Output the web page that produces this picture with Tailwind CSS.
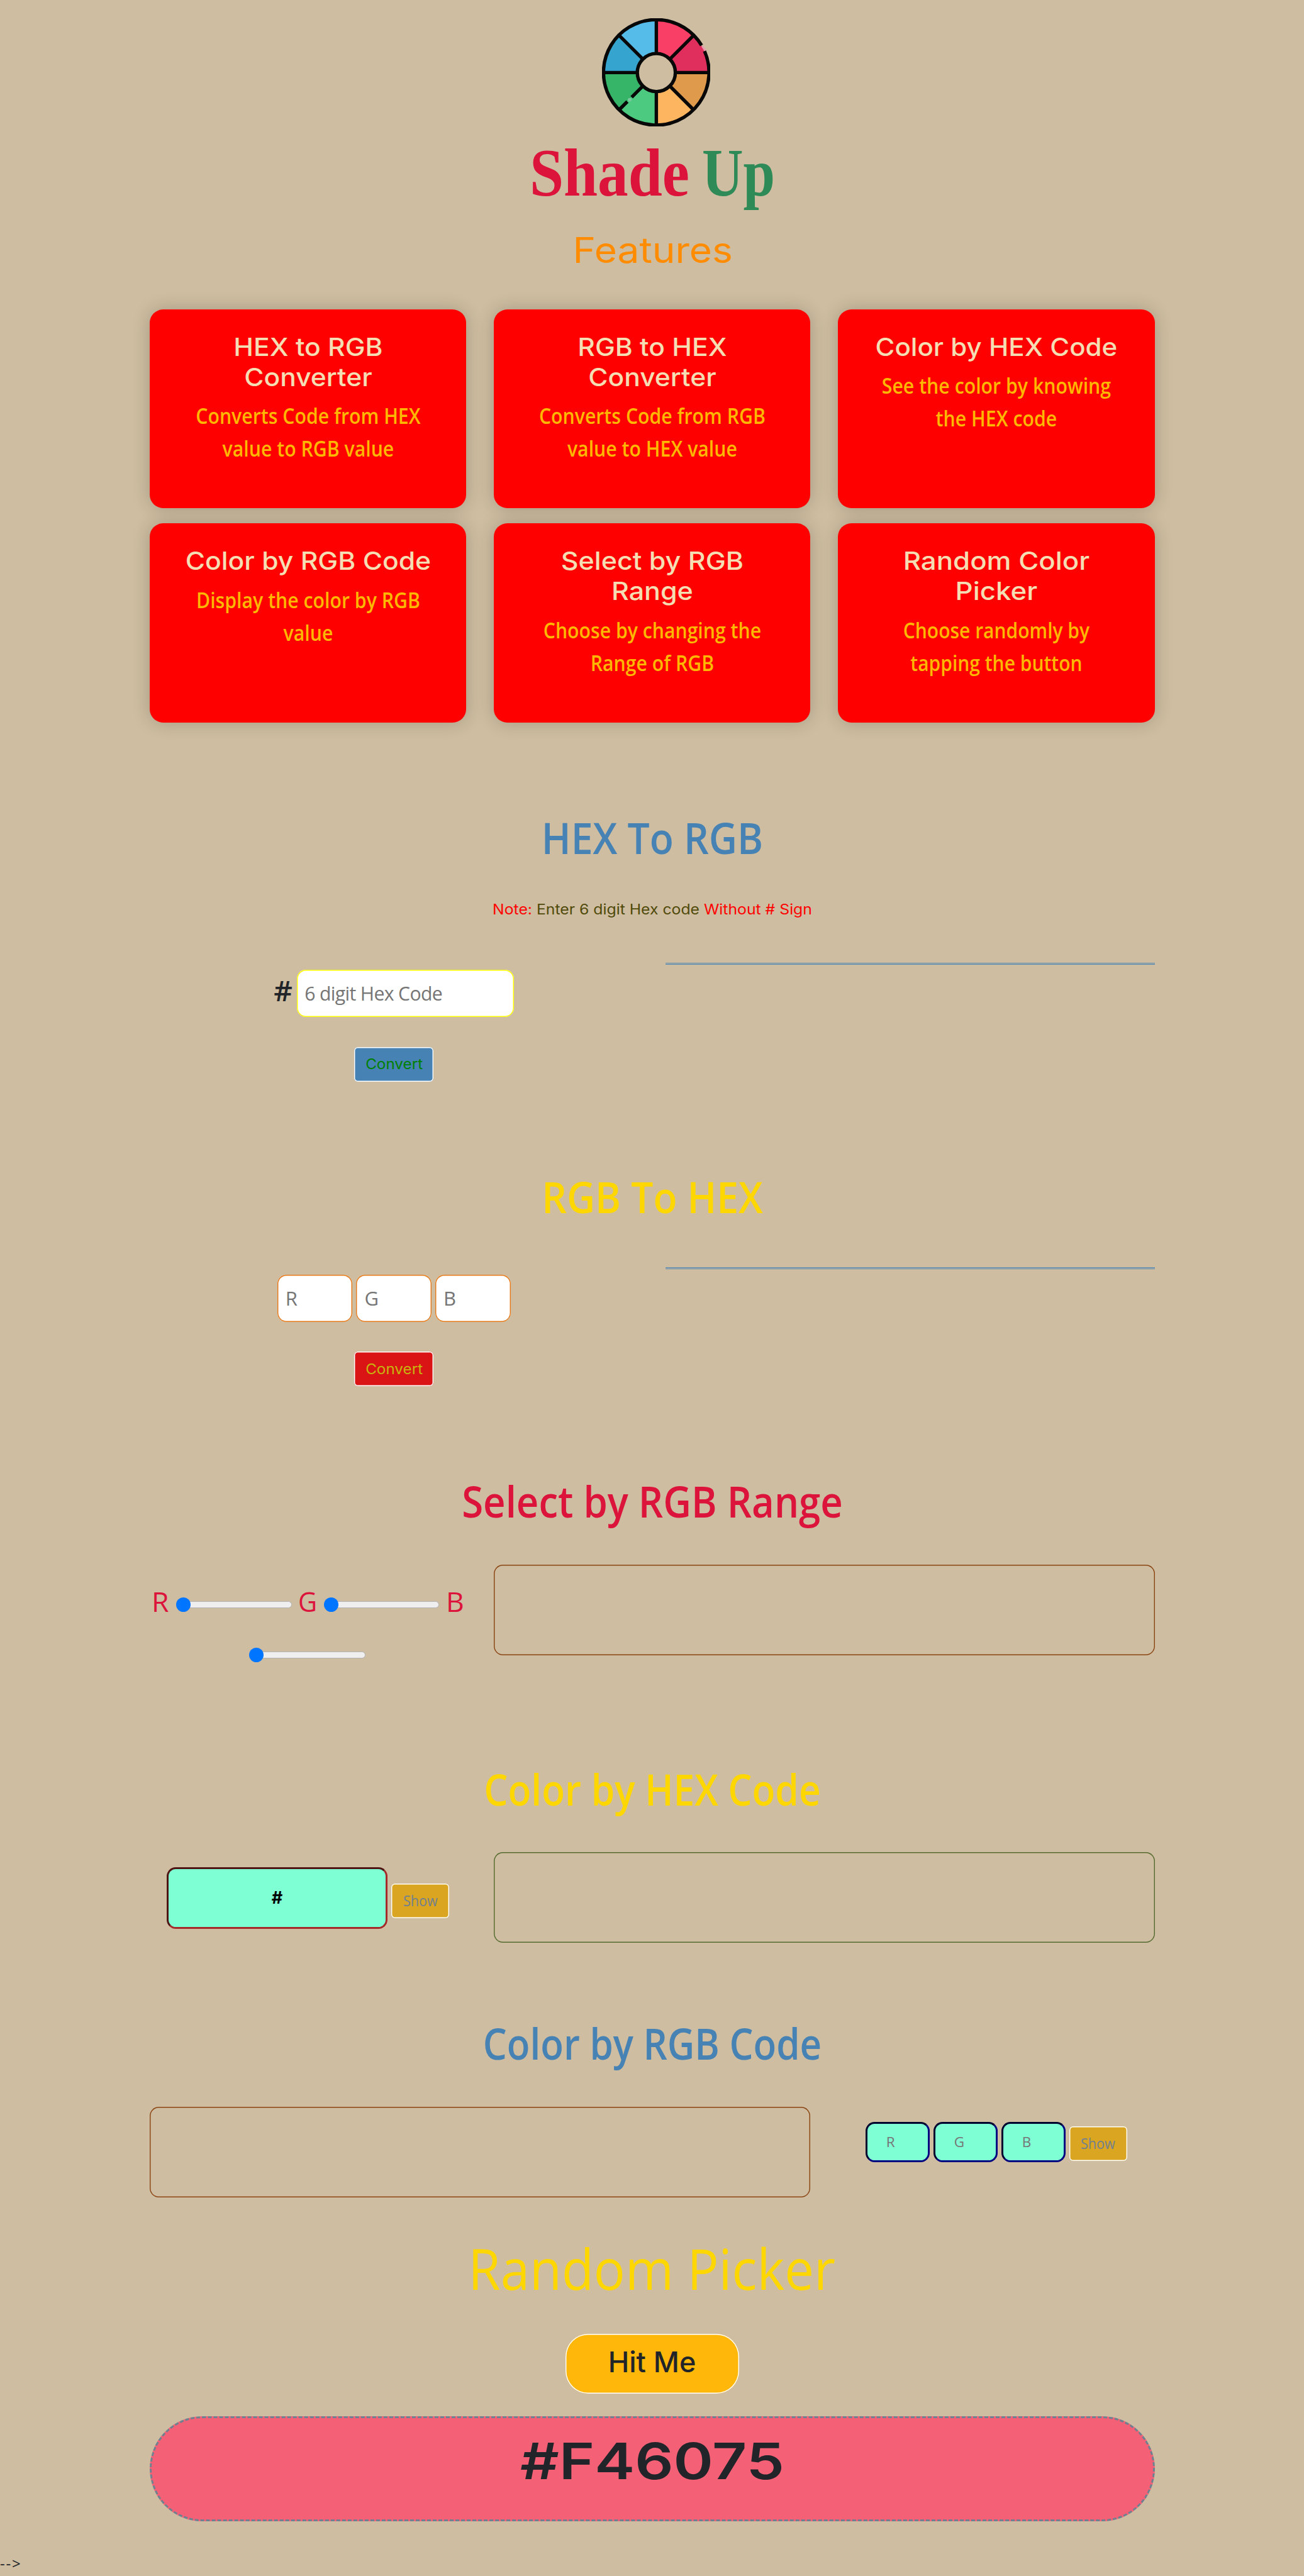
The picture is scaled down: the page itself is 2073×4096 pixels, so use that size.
<!DOCTYPE html>
<html lang="en">
<head>
<meta charset="utf-8">
<title>Shade Up</title>
<script src="https://cdn.jsdelivr.net/npm/@tailwindcss/browser@4"></script>
</head>
<body class="bg-[#cebda0] text-[#212529] font-['Open_Sans',sans-serif] overflow-x-hidden">
<main class="w-[1598px] mx-auto flex flex-col">

  <header class="flex flex-col items-center pt-[28.7px]">
    <svg class="w-[172.8px] h-[172.8px] ml-[13px] shrink-0" viewBox="-120 -120 240 240" fill="none">
      <path fill="#fa3f67" d="M0 0V-116A116 116 0 0 1 82-82Z"/>
      <path fill="#e02f5c" d="M0 0L82-82A116 116 0 0 1 116 0Z"/>
      <path fill="#e09a4b" d="M0 0H116A116 116 0 0 1 82 82Z"/>
      <path fill="#fdb560" d="M0 0L82 82A116 116 0 0 1 0 116Z"/>
      <path fill="#4bca80" d="M0 0V116A116 116 0 0 1-82 82Z"/>
      <path fill="#36b568" d="M0 0L-82 82A116 116 0 0 1-116 0Z"/>
      <path fill="#35a5d0" d="M0 0H-116A116 116 0 0 1-82-82Z"/>
      <path fill="#55bbe9" d="M0 0L-82-82A116 116 0 0 1 0-116Z"/>
      <circle r="42" fill="#cebda0"/>
      <path stroke="#e79bb0" stroke-width="4" d="M101.5-58L108.5-48"/>
      <circle cx="-59" cy="60" r="4" fill="#7cc9a0"/>
      <g stroke="#080808" stroke-width="7.500">
        <circle r="42"/>
        <path d="M0-42V-116M0 42V116M-42 0H-116M42 0H116M30-30L81-81M-30-30L-81-81M30 30L81 81M-30 30L-54.500 54.500M-64 64L-81 81"/>
        <path d="M106.400-47.400A116.500 116.500 0 1 1 99.900-60"/>
      </g>
    </svg>
    <h1 class="mt-[13.8px] mr-[4px] flex h-[120px] w-[386px] justify-between font-['Liberation_Serif',serif] text-[108px] leading-[120px] font-bold whitespace-nowrap">
      <span class="w-[252px] text-[#dc143c]"><span class="inline-block origin-left scale-x-[0.9]">Shade</span></span>
      <span class="w-[112px] text-[#2e8b57]"><span class="inline-block origin-left scale-x-[0.84]">Up</span></span>
    </h1>
    <h2 class="mt-[32.6px] ml-[3px] h-[60px] scale-x-[1.109] font-['Inter',sans-serif] text-[56px] leading-[60px] text-[#ff8c00]">Features</h2>
  </header>

  <section class="mt-[63.7px] grid grid-cols-3 auto-rows-[316.6px] gap-x-[43.2px] gap-y-[23.8px] text-center">
    <article class="rounded-[21.6px] bg-[#ff0000] px-5 pt-[36.2px] shadow-[0_0_28.8px_rgba(0,0,0,0.2)]">
      <h3 class="mb-[11.3px] scale-x-[1.06] font-['Inter',sans-serif] text-[40.2px] leading-[48.2px] font-medium text-[#f5deb3]">HEX to RGB<br>Converter</h3>
      <p class="scale-x-[0.869] text-[34.8px] leading-[52px] font-semibold text-[#ffb800]">Converts Code from HEX<br>value to RGB value</p>
    </article>
    <article class="rounded-[21.6px] bg-[#ff0000] px-5 pt-[36.2px] shadow-[0_0_28.8px_rgba(0,0,0,0.2)]">
      <h3 class="mb-[11.3px] scale-x-[1.06] font-['Inter',sans-serif] text-[40.2px] leading-[48.2px] font-medium text-[#f5deb3]">RGB to HEX<br>Converter</h3>
      <p class="scale-x-[0.869] text-[34.8px] leading-[52px] font-semibold text-[#ffb800]">Converts Code from RGB<br>value to HEX value</p>
    </article>
    <article class="rounded-[21.6px] bg-[#ff0000] px-5 pt-[36.2px] shadow-[0_0_28.8px_rgba(0,0,0,0.2)]">
      <h3 class="mb-[11.3px] scale-x-[1.047] font-['Inter',sans-serif] text-[40.2px] leading-[48.2px] font-medium text-[#f5deb3]">Color by HEX Code</h3>
      <p class="scale-x-[0.87] text-[34.8px] leading-[52px] font-semibold text-[#ffb800]">See the color by knowing<br>the HEX code</p>
    </article>
    <article class="rounded-[21.6px] bg-[#ff0000] px-5 pt-[36.2px] shadow-[0_0_28.8px_rgba(0,0,0,0.2)]">
      <h3 class="mb-[11.3px] scale-x-[1.062] font-['Inter',sans-serif] text-[40.2px] leading-[48.2px] font-medium text-[#f5deb3]">Color by RGB Code</h3>
      <p class="scale-x-[0.869] text-[34.8px] leading-[52px] font-semibold text-[#ffb800]">Display the color by RGB<br>value</p>
    </article>
    <article class="rounded-[21.6px] bg-[#ff0000] px-5 pt-[36.2px] shadow-[0_0_28.8px_rgba(0,0,0,0.2)]">
      <h3 class="mb-[11.3px] scale-x-[1.07] font-['Inter',sans-serif] text-[40.2px] leading-[48.2px] font-medium text-[#f5deb3]">Select by RGB<br>Range</h3>
      <p class="scale-x-[0.868] text-[34.8px] leading-[52px] font-semibold text-[#ffb800]">Choose by changing the<br>Range of RGB</p>
    </article>
    <article class="rounded-[21.6px] bg-[#ff0000] px-5 pt-[36.2px] shadow-[0_0_28.8px_rgba(0,0,0,0.2)]">
      <h3 class="mb-[11.3px] scale-x-[1.09] font-['Inter',sans-serif] text-[40.2px] leading-[48.2px] font-medium text-[#f5deb3]">Random Color<br>Picker</h3>
      <p class="scale-x-[0.862] text-[34.8px] leading-[52px] font-semibold text-[#ffb800]">Choose randomly by<br>tapping the button</p>
    </article>
  </section>

  <section class="mt-[142.5px]">
    <h2 class="scale-x-[0.904] text-center text-[69px] leading-[80px] font-semibold text-[#4682b4]">HEX To RGB</h2>
    <p class="mt-[57.7px] scale-x-[1.1] text-center font-['Inter',sans-serif] text-[22.5px] leading-[34px] whitespace-nowrap text-[#ff0000]">Note: <span class="text-[#504a0a]">Enter 6 digit Hex code</span> Without # Sign</p>
    <div class="mt-[68.2px] grid grid-cols-2 gap-x-[43.2px]">
      <div class="flex flex-col items-center pt-[11.5px]">
        <div class="flex items-start">
          <span class="w-[37px] text-[46px] leading-[64px] font-semibold">#</span>
          <input class="h-[75px] w-[345px] rounded-[14.4px] bg-white pl-[12px] text-[30.2px] tracking-[-0.65px] shadow-[inset_0_0_0_1.44px_#ffff00] placeholder:text-[#757575]" placeholder="6 digit Hex Code">
        </div>
        <button class="mt-[47.2px] h-[55px] w-[126.5px] rounded-[5.8px] bg-[#4682b4] font-['Inter',sans-serif] text-[22.2px] text-[#008000] shadow-[inset_0_0_0_1.44px_#ffffff]"><span class="inline-block scale-x-[1.093]">Convert</span></button>
      </div>
      <hr class="h-0 border-0 border-t-3 border-double border-[#4682b4]">
    </div>
  </section>

  <section class="mt-[142.3px]">
    <h2 class="scale-x-[0.902] text-center text-[69px] leading-[80px] font-semibold text-[#ffd700]">RGB To HEX</h2>
    <div class="mt-[73px] grid grid-cols-2 gap-x-[43.2px]">
      <div class="flex flex-col items-center pt-[12px]">
        <div class="flex gap-[6.1px]">
          <input class="h-[75px] w-[119.5px] rounded-[14.4px] bg-white pl-[13px] text-[31px] shadow-[inset_0_0_0_1.44px_#e67817] placeholder:text-[#757575]" placeholder="R">
          <input class="h-[75px] w-[119.5px] rounded-[14.4px] bg-white pl-[13px] text-[31px] shadow-[inset_0_0_0_1.44px_#e67817] placeholder:text-[#757575]" placeholder="G">
          <input class="h-[75px] w-[119.5px] rounded-[14.4px] bg-white pl-[13px] text-[31px] shadow-[inset_0_0_0_1.44px_#e67817] placeholder:text-[#757575]" placeholder="B">
        </div>
        <button class="mt-[47.5px] h-[55px] w-[126.5px] rounded-[5.8px] bg-[#da1414] font-['Inter',sans-serif] text-[22.2px] text-[#c8b40f] shadow-[inset_0_0_0_1.44px_#ffffff]"><span class="inline-block scale-x-[1.093]">Convert</span></button>
      </div>
      <hr class="h-0 border-0 border-t-3 border-double border-[#4682b4]">
    </div>
  </section>

  <section class="mt-[141.7px]">
    <h2 class="scale-x-[0.894] text-center text-[69px] leading-[80px] font-semibold text-[#dc143c]">Select by RGB Range</h2>
    <div class="mt-[61.7px] flex h-[180px] gap-[43.4px]">
      <div class="w-[504px] shrink-0 pt-[17.6px] pl-[3.5px] text-[44.5px] leading-[80px] text-[#dc143c]">
        <div class="flex h-[80.600px] items-center">
          <span class="w-[38.6px]">R</span>
          <div class="mt-[11px] flex h-[11px] w-[184.4px] items-center rounded-full border border-[#b2b2b2] bg-[#efefef]"><i class="-ml-px size-[23px] rounded-full bg-[#0075ff]"></i></div>
          <span class="ml-[10.2px] w-[40.4px]"><span class="inline-block origin-left scale-x-[0.93]">G</span></span>
          <div class="mt-[11px] flex h-[11px] w-[183.6px] items-center rounded-full border border-[#b2b2b2] bg-[#efefef]"><i class="-ml-px size-[23px] rounded-full bg-[#0075ff]"></i></div>
          <span class="ml-[10.8px]">B</span>
        </div>
        <div class="flex h-[80.600px] items-center">
          <div class="mt-[11px] ml-[155.3px] flex h-[11px] w-[184.4px] items-center rounded-full border border-[#b2b2b2] bg-[#efefef]"><i class="-ml-px size-[23px] rounded-full bg-[#0075ff]"></i></div>
        </div>
      </div>
      <div class="h-[144px] grow rounded-[14.4px] shadow-[inset_0_0_0_1.44px_#8b4513]"></div>
    </div>
  </section>

  <section class="mt-[136.1px]">
    <h2 class="scale-x-[0.874] text-center text-[69px] leading-[80px] font-semibold text-[#ffd700]">Color by HEX Code</h2>
    <div class="mt-[61px] flex h-[144px] gap-[43.4px]">
      <div class="flex w-[504px] shrink-0 items-start gap-[5.8px] pt-[23.7px] pl-[27.4px]">
        <input class="h-[98px] w-[351px] rounded-[14.4px] border-3 border-t-[#4f1414] border-r-[#a52a2a] border-b-[#a52a2a] border-l-[#4f1414] bg-[#7fffd4] text-center font-['Inter',sans-serif] text-[27px] font-bold text-black" value="#">
        <button class="mt-[26px] h-[55px] w-[92.5px] rounded-[5.8px] bg-[#daa520] text-[23.1px] text-[#708090] shadow-[inset_0_0_0_1.44px_#ffffff]"><span class="inline-block scale-x-[0.935]">Show</span></button>
      </div>
      <div class="grow rounded-[14.4px] shadow-[inset_0_0_0_1.44px_#556b2f]"></div>
    </div>
  </section>

  <section class="mt-[119.5px]">
    <h2 class="scale-x-[0.87] text-center text-[69px] leading-[80px] font-semibold text-[#4682b4]">Color by RGB Code</h2>
    <div class="mt-[61.8px] flex h-[144px]">
      <div class="w-[1050.600px] shrink-0 rounded-[14.4px] shadow-[inset_0_0_0_1.44px_#8b4513]"></div>
      <div class="ml-[87.6px] flex items-start gap-[6px] pt-[23.7px]">
        <input class="h-[64px] w-[102px] rounded-[14.4px] border-3 border-t-[#00002e] border-r-[#000080] border-b-[#000080] border-l-[#00002e] bg-[#7fffd4] pl-[30px] text-[22.5px] placeholder:text-[#757575]" placeholder="R">
        <input class="h-[64px] w-[102px] rounded-[14.4px] border-3 border-t-[#00002e] border-r-[#000080] border-b-[#000080] border-l-[#00002e] bg-[#7fffd4] pl-[30px] text-[22.5px] placeholder:text-[#757575]" placeholder="G">
        <input class="h-[64px] w-[102px] rounded-[14.4px] border-3 border-t-[#00002e] border-r-[#000080] border-b-[#000080] border-l-[#00002e] bg-[#7fffd4] pl-[30px] text-[22.5px] placeholder:text-[#757575]" placeholder="B">
        <button class="mt-[7.200px] h-[55px] w-[92px] rounded-[5.8px] bg-[#daa520] text-[23.1px] text-[#708090] shadow-[inset_0_0_0_1.44px_#ffffff]"><span class="inline-block scale-x-[0.935]">Show</span></button>
      </div>
    </div>
  </section>

  <section class="mt-[63.1px] flex flex-col items-center">
    <h2 class="scale-x-[0.935] text-[89px] leading-[100px] text-[#ffd700]">Random Picker</h2>
    <button class="mt-[53.4px] h-[95px] w-[276px] rounded-[36px] bg-[#ffb80a] pb-[5px] font-['Inter',sans-serif] text-[45px] font-medium shadow-[inset_0_0_0_1.44px_#ffffff]">Hit Me</button>
    <div class="mt-[35.9px] h-[167.2px] w-full rounded-full border-3 border-dashed border-[#708090] bg-[#f46075] text-center font-['Inter',sans-serif] text-[80px] leading-[136.8px] font-semibold"><span class="inline-block scale-x-[1.2]">#F46075</span></div>
  </section>
</main>
<p class="mt-[49.4px] h-[36px] text-[24px] leading-[36px] tracking-[1.8px]">--&gt;</p>
</body>
</html>
